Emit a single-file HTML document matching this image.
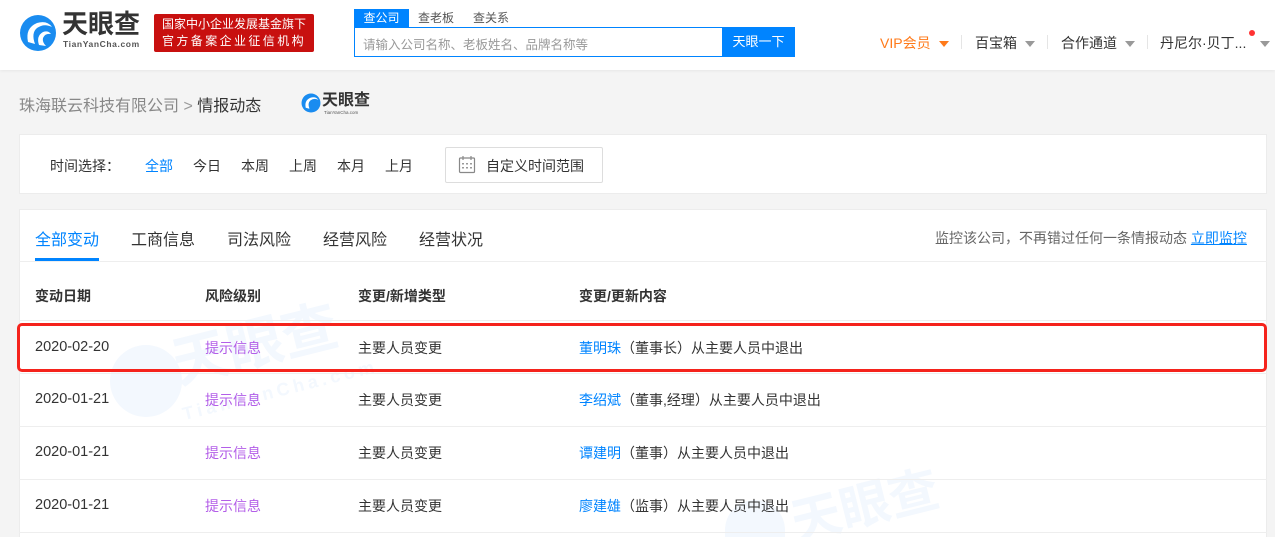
<!DOCTYPE html>
<html><head><meta charset="utf-8"><style>
*{margin:0;padding:0;box-sizing:border-box}
html,body{width:1275px;height:537px;overflow:hidden}
body{background:#f4f4f4;font-family:"Liberation Sans","Noto Sans CJK SC",sans-serif;color:#333;position:relative}
.a{position:absolute;white-space:nowrap}
.hdr{position:absolute;left:0;top:0;width:1275px;height:70px;background:#fff;box-shadow:0 1px 3px rgba(0,0,0,.06)}
.card{position:absolute;background:#fff;border:1px solid #ececec}
.f14{font-size:14px}
.blue{color:#0084ff}
.pur{color:#b35ee8}
.line{position:absolute;left:19px;width:1248px;height:1px;background:#eeeeee}
.tri{display:inline-block;width:0;height:0;border-left:5px solid transparent;border-right:5px solid transparent;border-top:6px solid #999;vertical-align:middle;margin-left:8px}
</style></head><body>
<div class="hdr">
 <svg class="a" style="left:19px;top:14px" width="38" height="38" viewBox="0 0 38 38"><circle cx="19" cy="19" r="18" fill="#1a8cf0"/><path d="M9 28 Q6 14 18 9 Q28 6 33 13 Q25 9 18 14 Q12 19 16 30 Z" fill="#fff"/><path d="M20 31 Q17 22 24 18 Q29 16 32 20 Q26 19 24 24 Q23 28 27 32 Z" fill="#fff"/></svg>
 <div class="a" style="left:62px;top:10px;font-size:26px;line-height:28px;font-weight:bold;color:#333">天眼查</div>
 <div class="a" style="left:63px;top:39px;font-size:8.5px;line-height:10px;font-weight:bold;color:#555;letter-spacing:.6px">TianYanCha.com</div>
 <div class="a" style="left:154px;top:14px;width:160px;height:38px;background:#c8100f;border-radius:2px;color:#fff;font-size:12px;line-height:17px;padding:2px 0 0 8px">国家中小企业发展基金旗下<br><span style="letter-spacing:2.4px">官方备案企业征信机构</span></div>
 <div class="a" style="left:354px;top:9px;width:55px;height:18px;background:#0084ff;color:#fff;font-size:12px;text-align:center;line-height:18px">查公司</div>
 <div class="a" style="left:418px;top:9px;font-size:12px;color:#555;line-height:18px">查老板</div>
 <div class="a" style="left:473px;top:9px;font-size:12px;color:#555;line-height:18px">查关系</div>
 <div class="a" style="left:354px;top:27px;width:441px;height:30px;border:1px solid #0084ff;background:#fff"></div>
 <div class="a" style="left:363px;top:34px;font-size:12.5px;color:#999">请输入公司名称、老板姓名、品牌名称等</div>
 <div class="a" style="left:722px;top:27px;width:73px;height:30px;background:#0084ff;color:#fff;font-size:13px;text-align:center;line-height:30px">天眼一下</div>
 <div class="a f14" style="left:880px;top:33px;color:#ff7a1a">VIP会员<span class="tri" style="border-top-color:#ff7a1a"></span></div>
 <div class="a" style="left:961px;top:35px;width:1px;height:14px;background:#e5e5e5"></div>
 <div class="a f14" style="left:975px;top:33px">百宝箱<span class="tri"></span></div>
 <div class="a" style="left:1047px;top:35px;width:1px;height:14px;background:#e5e5e5"></div>
 <div class="a f14" style="left:1061px;top:33px">合作通道<span class="tri"></span></div>
 <div class="a" style="left:1147px;top:35px;width:1px;height:14px;background:#e5e5e5"></div>
 <div class="a f14" style="left:1160px;top:33px">丹尼尔·贝丁...<span class="tri" style="margin-left:14px"></span></div>
 <div class="a" style="left:1249px;top:30px;width:6px;height:6px;border-radius:50%;background:#f33"></div>
</div>
<div class="a" style="left:19px;top:92px;font-size:16px;color:#888">珠海联云科技有限公司 <span style="color:#999">&gt;</span> <span style="color:#333">情报动态</span></div>
<svg class="a" style="left:301px;top:93px" width="20" height="20" viewBox="0 0 38 38"><circle cx="19" cy="19" r="18" fill="#1a8cf0"/><path d="M9 28 Q6 14 18 9 Q28 6 33 13 Q25 9 18 14 Q12 19 16 30 Z" fill="#fff"/></svg>
<div class="a" style="left:322px;top:92px;font-size:16px;line-height:17px;font-weight:bold;color:#333">天眼查</div>
<div class="a" style="left:324px;top:110px;font-size:4.5px;color:#555">TianYanCha.com</div>

<div class="card" style="left:19px;top:134px;width:1248px;height:60px"></div>
<div class="a" style="left:50px;top:156px;font-size:14px;color:#333">时间选择：</div>
<div class="a" style="left:145px;top:156px;font-size:14px" ><span class="blue">全部</span></div>
<div class="a" style="left:193px;top:156px;font-size:14px">今日</div>
<div class="a" style="left:241px;top:156px;font-size:14px">本周</div>
<div class="a" style="left:289px;top:156px;font-size:14px">上周</div>
<div class="a" style="left:337px;top:156px;font-size:14px">本月</div>
<div class="a" style="left:385px;top:156px;font-size:14px">上月</div>
<div class="a" style="left:445px;top:147px;width:158px;height:36px;border:1px solid #ddd;border-radius:2px"></div>
<svg class="a" style="left:458px;top:155px" width="18" height="19" viewBox="0 0 18 19"><rect x="1.5" y="3" width="15" height="14.5" rx="1" fill="none" stroke="#888" stroke-width="1.2"/><line x1="5" y1="1" x2="5" y2="5" stroke="#888" stroke-width="1.2"/><line x1="13" y1="1" x2="13" y2="5" stroke="#888" stroke-width="1.2"/><g fill="#999"><rect x="4" y="8" width="2" height="1.5"/><rect x="8" y="8" width="2" height="1.5"/><rect x="12" y="8" width="2" height="1.5"/><rect x="4" y="12" width="2" height="1.5"/><rect x="8" y="12" width="2" height="1.5"/><rect x="12" y="12" width="2" height="1.5"/></g></svg>
<div class="a" style="left:486px;top:156px;font-size:14px">自定义时间范围</div>

<div class="card" style="left:19px;top:209px;width:1248px;height:328px;border-bottom:none"></div>
<!-- watermarks -->
<div class="a" style="left:110px;top:345px;width:72px;height:72px;border-radius:50%;background:#f3f8fe"></div>
<div class="a" style="left:170px;top:300px;font-size:56px;font-weight:bold;color:#f3f8fe;transform:rotate(-14deg)">天眼查</div>
<div class="a" style="left:180px;top:380px;font-size:18px;font-weight:bold;color:#f3f8fe;transform:rotate(-14deg);letter-spacing:4px">TianYanCha.com</div>
<div class="a" style="left:725px;top:500px;width:60px;height:37px;border-radius:30px 30px 0 0;background:#f3f8fe"></div>
<div class="a" style="left:790px;top:475px;height:62px;overflow:hidden;font-size:50px;line-height:62px;font-weight:bold;color:#f3f8fe;transform:rotate(-14deg)">天眼查</div>

<div class="a" style="left:35px;top:226px;font-size:16px" ><span class="blue">全部变动</span></div>
<div class="a" style="left:35px;top:258px;width:64px;height:3px;background:#0084ff"></div>
<div class="a" style="left:131px;top:226px;font-size:16px">工商信息</div>
<div class="a" style="left:227px;top:226px;font-size:16px">司法风险</div>
<div class="a" style="left:323px;top:226px;font-size:16px">经营风险</div>
<div class="a" style="left:419px;top:226px;font-size:16px">经营状况</div>
<div class="a" style="left:935px;top:228px;font-size:14px;color:#666">监控该公司，不再错过任何一条情报动态 <span class="blue" style="text-decoration:underline">立即监控</span></div>
<div class="line" style="top:261px"></div>
<div class="a" style="left:35px;top:286px;font-size:14px;font-weight:bold">变动日期</div>
<div class="a" style="left:205px;top:286px;font-size:14px;font-weight:bold">风险级别</div>
<div class="a" style="left:358px;top:286px;font-size:14px;font-weight:bold">变更/新增类型</div>
<div class="a" style="left:579px;top:286px;font-size:14px;font-weight:bold">变更/更新内容</div>
<div class="line" style="top:320px"></div>

<div class="a" style="left:35px;top:339px;font-size:14.5px">2020-02-20</div>
<div class="a pur" style="left:205px;top:338px;font-size:14px">提示信息</div>
<div class="a" style="left:358px;top:338px;font-size:14px">主要人员变更</div>
<div class="a" style="left:579px;top:338px;font-size:14px"><span class="blue">董明珠</span>（董事长）从主要人员中退出</div>
<div class="line" style="top:373px"></div>
<div class="a" style="left:35px;top:391px;font-size:14.5px">2020-01-21</div>
<div class="a pur" style="left:205px;top:390px;font-size:14px">提示信息</div>
<div class="a" style="left:358px;top:390px;font-size:14px">主要人员变更</div>
<div class="a" style="left:579px;top:390px;font-size:14px"><span class="blue">李绍斌</span>（董事,经理）从主要人员中退出</div>
<div class="line" style="top:426px"></div>
<div class="a" style="left:35px;top:444px;font-size:14.5px">2020-01-21</div>
<div class="a pur" style="left:205px;top:443px;font-size:14px">提示信息</div>
<div class="a" style="left:358px;top:443px;font-size:14px">主要人员变更</div>
<div class="a" style="left:579px;top:443px;font-size:14px"><span class="blue">谭建明</span>（董事）从主要人员中退出</div>
<div class="line" style="top:479px"></div>
<div class="a" style="left:35px;top:497px;font-size:14.5px">2020-01-21</div>
<div class="a pur" style="left:205px;top:496px;font-size:14px">提示信息</div>
<div class="a" style="left:358px;top:496px;font-size:14px">主要人员变更</div>
<div class="a" style="left:579px;top:496px;font-size:14px"><span class="blue">廖建雄</span>（监事）从主要人员中退出</div>
<div class="line" style="top:532px"></div>

<div class="a" style="left:17px;top:323px;width:1250px;height:49px;border:3px solid #f5231c;border-radius:5px"></div>
</body></html>
